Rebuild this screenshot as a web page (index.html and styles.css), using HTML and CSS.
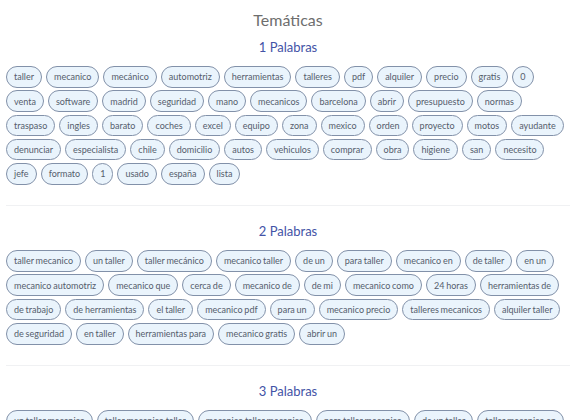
FILE: index.html
```html
<!DOCTYPE html>
<html lang="es">
<head>
<meta charset="utf-8">
<link rel="stylesheet" href="styles.css">
</head>
<body>
<div class="page">
  <h1 class="title">Temáticas</h1>
  <section class="group">
    <h2 class="group-title">1 Palabras</h2>
    <div class="tags">
      <span class="tag">taller</span><span class="tag">mecanico</span><span class="tag">mecánico</span><span class="tag">automotriz</span><span class="tag">herramientas</span><span class="tag">talleres</span><span class="tag">pdf</span><span class="tag">alquiler</span><span class="tag">precio</span><span class="tag">gratis</span><span class="tag">0</span>
      <span class="tag">venta</span><span class="tag">software</span><span class="tag">madrid</span><span class="tag">seguridad</span><span class="tag">mano</span><span class="tag">mecanicos</span><span class="tag">barcelona</span><span class="tag">abrir</span><span class="tag">presupuesto</span><span class="tag">normas</span>
      <span class="tag">traspaso</span><span class="tag">ingles</span><span class="tag">barato</span><span class="tag">coches</span><span class="tag">excel</span><span class="tag">equipo</span><span class="tag">zona</span><span class="tag">mexico</span><span class="tag">orden</span><span class="tag">proyecto</span><span class="tag">motos</span><span class="tag">ayudante</span>
      <span class="tag">denunciar</span><span class="tag">especialista</span><span class="tag">chile</span><span class="tag">domicilio</span><span class="tag">autos</span><span class="tag">vehiculos</span><span class="tag">comprar</span><span class="tag">obra</span><span class="tag">higiene</span><span class="tag">san</span><span class="tag">necesito</span>
      <span class="tag">jefe</span><span class="tag">formato</span><span class="tag">1</span><span class="tag">usado</span><span class="tag">españa</span><span class="tag">lista</span>
    </div>
  </section>
  <section class="group">
    <h2 class="group-title">2 Palabras</h2>
    <div class="tags">
      <span class="tag">taller mecanico</span><span class="tag">un taller</span><span class="tag">taller mecánico</span><span class="tag">mecanico taller</span><span class="tag">de un</span><span class="tag">para taller</span><span class="tag">mecanico en</span><span class="tag">de taller</span><span class="tag">en un</span>
      <span class="tag">mecanico automotriz</span><span class="tag">mecanico que</span><span class="tag">cerca de</span><span class="tag">mecanico de</span><span class="tag">de mi</span><span class="tag">mecanico como</span><span class="tag">24 horas</span><span class="tag">herramientas de</span>
      <span class="tag">de trabajo</span><span class="tag">de herramientas</span><span class="tag">el taller</span><span class="tag">mecanico pdf</span><span class="tag">para un</span><span class="tag">mecanico precio</span><span class="tag">talleres mecanicos</span><span class="tag">alquiler taller</span>
      <span class="tag">de seguridad</span><span class="tag">en taller</span><span class="tag">herramientas para</span><span class="tag">mecanico gratis</span><span class="tag">abrir un</span>
    </div>
  </section>
  <section class="group">
    <h2 class="group-title">3 Palabras</h2>
    <div class="tags">
      <span class="tag">un taller mecanico</span><span class="tag">taller mecanico taller</span><span class="tag">mecanico taller mecanico</span><span class="tag">para taller mecanico</span><span class="tag">de un taller</span><span class="tag">taller mecanico en</span>
    </div>
  </section>
</div>
</body>
</html>
```

FILE: styles.css
```css
html, body {
  margin: 0;
  padding: 0;
  background: #ffffff;
}

.page {
  width: 570px;
  padding: 0 0 0 6px;
  box-sizing: border-box;
  font-family: "Lato", "Noto Sans", sans-serif;
}

.title {
  margin: 0;
  padding-top: 10px;
  height: 30px;
  box-sizing: border-box;
  text-align: center;
  font-size: 16px;
  font-weight: 400;
  line-height: 20px;
  color: #6e6e6e;
}

.group {
  padding-top: 7px;
  padding-bottom: 20.5px;
  border-bottom: 1px solid #f0f1f3;
}

.group + .group {
  padding-top: 15px;
}

.group-title {
  margin: 0 0 9px 0;
  text-align: center;
  font-size: 13px;
  font-weight: 400;
  line-height: 20px;
  color: #4353a6;
}

.tags {
  display: flex;
  flex-wrap: wrap;
  gap: 2.8px 4px;
}

.tag {
  display: inline-flex;
  align-items: center;
  height: 21.5px;
  box-sizing: border-box;
  padding: 0 7px;
  border: 1.5px solid #8291a9;
  border-radius: 11px;
  background: #eaf4fc;
  color: #555d6c;
  font-size: 9px;
  word-spacing: -0.5px;
  white-space: nowrap;
}
```
